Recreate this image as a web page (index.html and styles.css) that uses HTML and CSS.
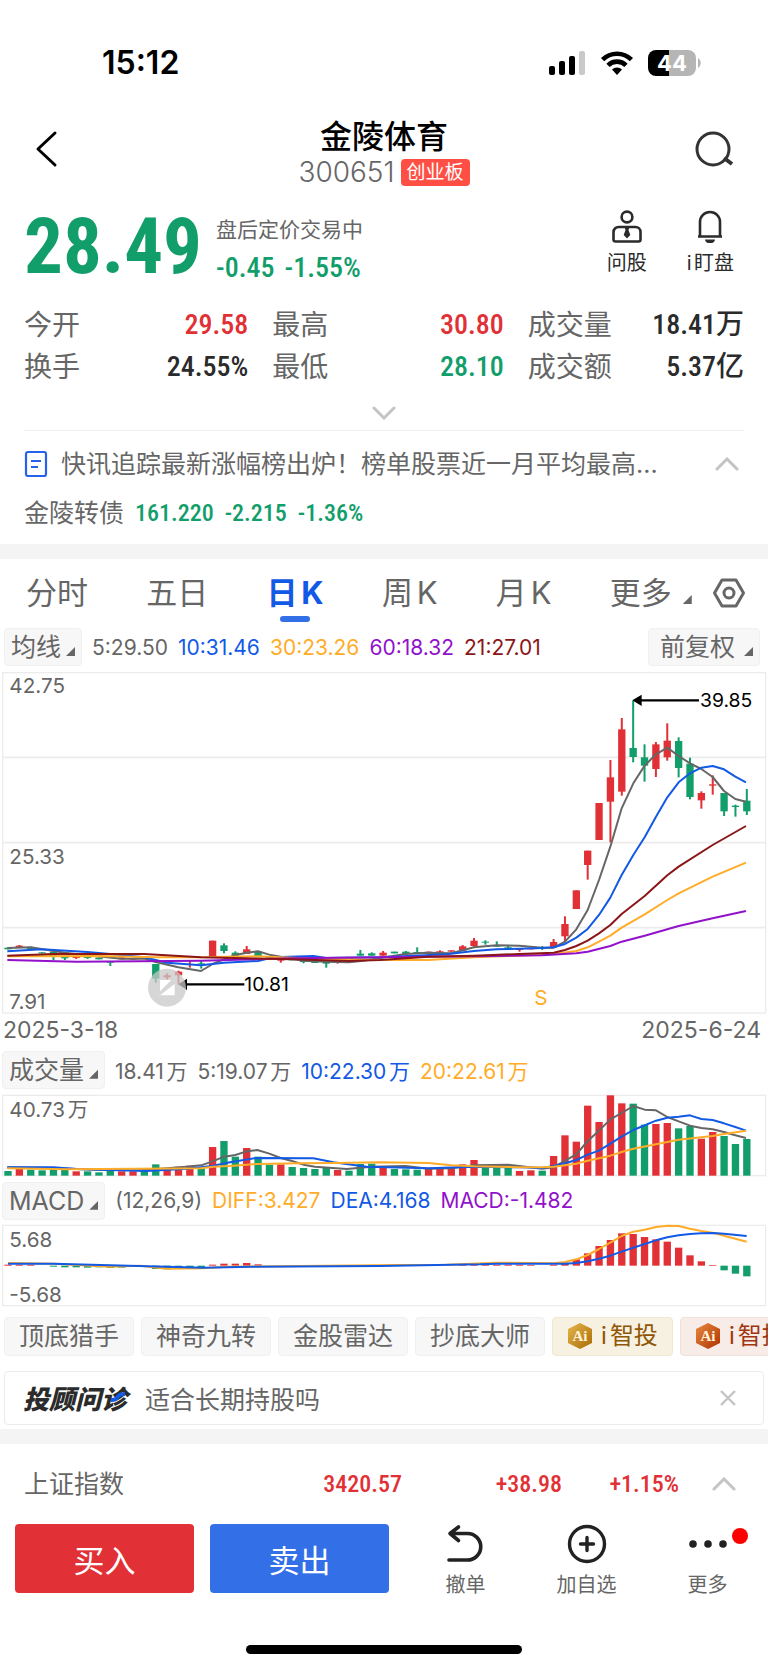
FILE: index.html
```html
<!DOCTYPE html>
<html lang="zh-CN">
<head>
<meta charset="utf-8">
<meta name="viewport" content="width=device-width, initial-scale=1">
<title>金陵体育 300651</title>
<link rel="stylesheet" href="styles.css">
</head>
<body>
<div class="status">
  <span class="clock">15:12</span>
  <span class="indicators">
    <svg width="38" height="26" viewBox="0 0 38 26"><rect x="1" y="16" width="6" height="9" rx="2"/><rect x="11" y="11" width="6" height="14" rx="2"/><rect x="21" y="6" width="6" height="19" rx="2"/><rect x="31" y="1" width="6" height="24" rx="2" fill="#c9c9c9"/></svg>
    <svg width="34" height="26" viewBox="0 0 34 26"><g fill="none" stroke="#000" stroke-width="4.6"><path d="M2.6 9.6A20.5 20.5 0 0 1 31.4 9.6"/><path d="M8 15.4A12.6 12.6 0 0 1 26 15.4"/></g><path d="M17 25l-5-5.4a7 7 0 0 1 10 0z"/></svg>
    <span class="battery"><span class="level">44</span><svg width="5" height="10" viewBox="0 0 5 10"><path d="M1 0a6 6 0 0 1 0 10z" fill="#b5b5b5"/></svg></span>
  </span>
</div>

<header class="top">
  <button class="icon-btn" aria-label="返回"><svg width="44" height="44" viewBox="0 0 44 44"><path d="M23 6 6 22l17 16" fill="none" stroke="#000" stroke-width="3" stroke-linecap="round" stroke-linejoin="round"/></svg></button>
  <div class="title">
    <h1>金陵体育</h1>
    <p class="code"><span>300651</span><span class="tag">创业板</span></p>
  </div>
  <button class="icon-btn" aria-label="搜索"><svg width="44" height="44" viewBox="0 0 44 44"><g fill="none" stroke="#333" stroke-width="3"><circle cx="21" cy="22" r="16"/><path d="m32 31 8 6" stroke-width="4"/></g></svg></button>
</header>

<section class="quote">
  <strong class="price">28.49</strong>
  <div class="change">
    <span class="session">盘后定价交易中</span>
    <span class="delta"><span>-0.45</span><span>-1.55%</span></span>
  </div>
  <div class="tools">
    <button class="tool"><svg width="32" height="34" viewBox="0 0 32 34"><g fill="none" stroke="#2b2b2b" stroke-width="2.6"><circle cx="16" cy="8" r="5.4"/><path d="M4.500 32.500h23a2 2 0 0 0 2-2V23a5 5 0 0 0-5-5h-17a5 5 0 0 0-5 5v7.500a2 2 0 0 0 2 2z"/></g><path d="M13.500 18h5l-1 3 1.800 5-3.300 3.400-3.300-3.400 1.800-5z" fill="#2b2b2b"/></svg>问股</button>
    <button class="tool"><svg width="32" height="34" viewBox="0 0 32 34"><path d="M4 27.500h24M6 27V13a10 10 0 0 1 20 0v14" fill="none" stroke="#2b2b2b" stroke-width="2.600"/><path d="M11 30.500h10a5 4 0 0 1-10 0z" fill="#2b2b2b"/></svg>i盯盘</button>
  </div>
</section>

<dl class="stats">
  <div><dt>今开</dt><dd class="up">29.58</dd></div>
  <div><dt>最高</dt><dd class="up">30.80</dd></div>
  <div><dt>成交量</dt><dd>18.41万</dd></div>
  <div><dt>换手</dt><dd>24.55%</dd></div>
  <div><dt>最低</dt><dd class="down">28.10</dd></div>
  <div><dt>成交额</dt><dd>5.37亿</dd></div>
</dl>
<button class="expand" aria-label="展开"><svg class="chev" viewBox="0 0 24 14"><path d="M2 2l10 10L22 2"/></svg></button>

<section class="related">
  <a class="news" href="#"><svg width="24" height="28" viewBox="0 0 24 28"><g fill="none" stroke="#2563eb" stroke-width="2.200"><rect x="2" y="2" width="20" height="24" rx="2"/><path d="M7 11h10M7 17h7"/></g></svg><span>快讯追踪最新涨幅榜出炉！榜单股票近一月平均最高...</span></a>
  <button class="fold" aria-label="收起"><svg class="chev" viewBox="0 0 24 14"><path d="M2 12L12 2l10 10"/></svg></button>
  <a class="bond" href="#"><span>金陵转债</span><b>161.220</b><b>-2.215</b><b>-1.36%</b></a>
</section>

<main class="chart">
  <nav class="tabs">
    <a href="#">分时</a><a href="#">五日</a><a href="#" class="active">日K</a><a href="#">周K</a><a href="#">月K</a><a href="#" class="more">更多<i class="caret"></i></a>
    <button class="icon-btn" aria-label="设置"><svg width="34" height="32" viewBox="0 0 34 32"><g fill="none" stroke="#666" stroke-width="3"><path d="M10 3h14l7.500 13L24 29H10L2.500 16z" stroke-linejoin="round"/><circle cx="17" cy="16" r="5"/></g></svg></button>
  </nav>
  <div class="legend">
    <button class="pick">均线<i class="caret"></i></button>
    <span>5:29.50</span><span class="blue">10:31.46</span><span class="orange">30:23.26</span><span class="purple">60:18.32</span><span class="maroon">21:27.01</span>
    <button class="pick adjust">前复权<i class="caret"></i></button>
  </div>
  <svg class="plot main" id="kline" viewBox="0 0 2304 1034" role="img" aria-label="日K线"></svg>
  <div class="dates"><span>2025-3-18</span><span>2025-6-24</span></div>
  <div class="legend sub">
    <button class="pick">成交量<i class="caret"></i></button>
    <span>18.41万</span><span>5:19.07万</span><span class="blue">10:22.30万</span><span class="orange">20:22.61万</span>
  </div>
  <svg class="plot" id="volume" viewBox="0 156 2304 261" role="img" aria-label="成交量"></svg>
  <div class="legend sub">
    <button class="pick">MACD<i class="caret"></i></button>
    <span>(12,26,9)</span><span class="orange">DIFF:3.427</span><span class="blue">DEA:4.168</span><span class="purple">MACD:-1.482</span>
  </div>
  <svg class="plot" id="macd" viewBox="0 549 2304 261" role="img" aria-label="MACD"></svg>
</main>

<div class="chips">
  <button>顶底猎手</button><button>神奇九转</button><button>金股雷达</button><button>抄底大师</button>
  <button class="gold"><svg width="26" height="26" viewBox="0 0 26 26"><defs><linearGradient id="g1" x1="0" y1="0" x2="1" y2="1"><stop offset="0" stop-color="#e8b64c"/><stop offset="1" stop-color="#a86a08"/></linearGradient></defs><path d="M13 0 25 6v14l-12 6L1 20V6z" fill="url(#g1)"/><text x="13" y="18" text-anchor="middle" class="ai">Ai</text></svg>i智投</button>
  <button class="copper"><svg width="26" height="26" viewBox="0 0 26 26"><defs><linearGradient id="g2" x1="0" y1="0" x2="1" y2="1"><stop offset="0" stop-color="#e98a3c"/><stop offset="1" stop-color="#ad3206"/></linearGradient></defs><path d="M13 0 25 6v14l-12 6L1 20V6z" fill="url(#g2)"/><text x="13" y="18" text-anchor="middle" class="ai">Ai</text></svg>i智投</button>
</div>

<section class="advice">
  <strong>投顾问诊<svg width="14" height="10" viewBox="0 0 14 10"><path d="M0 8c5 0 5-1 7-3.500S10 2 14 2" fill="none" stroke="#1259e6" stroke-width="4"/></svg></strong><span>适合长期持股吗</span>
  <button class="icon-btn" aria-label="关闭"><svg width="16" height="16" viewBox="0 0 16 16"><path d="M1 1l14 14M15 1L1 15" stroke="#c4c4c4" stroke-width="2.400"/></svg></button>
</section>

<section class="index">
  <span class="name">上证指数</span><b>3420.57</b><b>+38.98</b><b>+1.15%</b>
  <button class="icon-btn" aria-label="展开指数"><svg class="chev" viewBox="0 0 24 14"><path d="M2 12L12 2l10 10"/></svg></button>
</section>

<footer class="actions">
  <button class="trade buy">买入</button>
  <button class="trade sell">卖出</button>
  <button class="act"><svg width="40" height="40" viewBox="0 0 40 40"><path d="M3 36h18.500a13.200 13.200 0 0 0 0-26.500H4M12.500 3 4 9.500l8.500 7" fill="none" stroke="#222" stroke-width="3.600" stroke-linecap="round" stroke-linejoin="round"/></svg>撤单</button>
  <button class="act"><svg width="40" height="40" viewBox="0 0 40 40"><g fill="none" stroke="#222" stroke-width="3.400" stroke-linecap="round"><circle cx="20" cy="20" r="17.500"/><path d="M20 13.500v13M13.500 20h13"/></g></svg>加自选</button>
  <button class="act"><svg width="40" height="40" viewBox="0 0 40 40"><g fill="#222"><circle cx="5" cy="20" r="3.800"/><circle cx="20" cy="20" r="3.800"/><circle cx="35" cy="20" r="3.800"/></g></svg><i class="dot"></i>更多</button>
</footer>
<div class="home"></div>
<script src="charts.js"></script>
</body>
</html>
```
FILE: styles.css
```css
* { box-sizing: border-box; margin: 0; padding: 0; }
body { background: #fff; color: #666; font-family: Inter, "Noto Sans CJK SC", sans-serif; text-autospace: normal; overflow-x: hidden; }
button { border: 0; background: none; font: inherit; color: inherit; }
a { color: inherit; text-decoration: none; }
svg { display: block; flex: none; }
.icon-btn { display: flex; align-items: center; justify-content: center; }
.up, .index b { color: #e13036; }
.down { color: #129e6b; }
.blue { color: #1259e6; }
.orange { color: #ffac28; }
.purple { color: #9211cb; }
.maroon { color: #8b1618; }

.status { display: flex; justify-content: space-between; align-items: center; height: 119px; padding: 6px 66px 0 102px; }
.clock { font-size: 32px; font-weight: 600; color: #000; }
.indicators { display: flex; align-items: center; gap: 14px; }
.battery { display: flex; align-items: center; gap: 1px; }
.level { width: 48px; height: 26px; border-radius: 8px; background: linear-gradient(90deg, #000 44%, #b5b5b5 44%); color: #fff; font-size: 22px; font-weight: 700; line-height: 26px; text-align: center; }

.top { display: flex; justify-content: space-between; align-items: flex-start; padding: 0 32px; }
.top .icon-btn { height: 60px; }
.title { text-align: center; }
.title h1 { font-size: 32px; font-weight: 500; line-height: 36px; color: #000; }
.code { display: flex; align-items: center; justify-content: center; gap: 6px; font-size: 28px; font-weight: 300; line-height: 34px; }
.tag { padding: 0 6px; border-radius: 4px; background: #ff4f45; color: #fff; font-size: 19px; font-weight: 400; line-height: 27px; }

.price, .delta, .stats dd, .bond b, .index b { font-family: "Roboto Condensed", "Liberation Sans Narrow", Roboto, "Noto Sans CJK SC", sans-serif; text-autospace: no-autospace; }
.quote { display: flex; align-items: center; height: 115px; padding: 0 24px; }
.price { font-size: 77px; line-height: 84px; color: #129e6b; font-weight: 700; }
.change { display: flex; flex-direction: column; gap: 8px; margin-left: 14px; padding-top: 4px; }
.session { font-size: 21px; line-height: 30px; }
.delta { display: flex; gap: 10px; font-size: 28px; font-weight: 500; line-height: 30px; color: #129e6b; }
.tools { display: flex; gap: 40px; margin-left: auto; padding: 0 10px 8px 0; }
.tool { display: flex; flex-direction: column; align-items: center; gap: 6px; font-size: 20px; line-height: 28px; color: #2b2b2b; }

.stats { display: grid; grid-template-columns: 224fr 231fr 216fr; column-gap: 24px; padding: 0 24px; }
.stats div { display: flex; justify-content: space-between; align-items: center; height: 42px; }
.stats dt { font-size: 28px; line-height: 38px; }
.stats dd { font-size: 28px; font-weight: 500; line-height: 42px; color: #2b2b2b; }
.stats dd.up { color: #e13036; }
.stats dd.down { color: #129e6b; }
.expand { display: flex; justify-content: center; align-items: center; width: 100%; height: 42px; padding-top: 8px; }
.chev { width: 24px; height: 14px; fill: none; stroke: #c4c4c4; stroke-width: 3; stroke-linecap: round; }

.related { display: grid; grid-template-columns: 1fr auto; align-items: center; margin: 0 24px; padding: 8px 0 6px; border-top: 1px solid #f0f0f0; height: 114px; }
.news { display: flex; align-items: center; gap: 13px; min-width: 0; font-size: 25px; line-height: 48px; white-space: nowrap; text-autospace: no-autospace; }
.fold { padding: 0 5px; }
.bond { display: flex; align-items: center; grid-column: 1 / -1; gap: 11px; font-size: 25px; line-height: 48px; }
.bond b { color: #129e6b; font-weight: 500; font-size: 24px; }

.chart { border-top: 15px solid #f4f4f4; }
.tabs { display: flex; justify-content: space-between; align-items: center; height: 68px; padding: 0 22px 0 26px; font-size: 31px; }
.tabs a { position: relative; line-height: 58px; }
.tabs .active { color: #1259e6; font-weight: 700; }
.tabs .active::after { content: ""; position: absolute; left: 50%; bottom: 0; width: 30px; height: 6px; margin-left: -15px; border-radius: 3px; background: #3370e8; }
.caret { display: inline-block; width: 9px; height: 9px; margin-left: 5px; background: #666; clip-path: polygon(100% 0, 100% 100%, 0 100%); }
.tabs .caret { margin-left: 11px; }
.tabs .more { margin-right: -38px; }
.legend { display: flex; align-items: center; gap: 10px; height: 40px; padding: 0 8px 0 4px; font-size: 21px; white-space: nowrap; }
.pick { height: 38px; padding: 0 6px; border: 1px solid #f0f0f0; border-radius: 4px; background: #f7f7f7; font-size: 25px; line-height: 36px; }
.adjust { margin-left: auto; padding: 0 6px 0 11px; }
.adjust .caret { margin-left: 9px; }
.plot { width: 100%; height: auto; }
.main { margin-top: 3px; }
.plot text { font-size: 62px; fill: #666; text-autospace: no-autospace; }
.plot .mark { fill: #000; font-size: 58px; }
.dates { display: flex; justify-content: space-between; padding: 0 7px 0 3px; font-size: 23px; line-height: 30px; }
.sub { height: 44px; padding-left: 2px; }
.dates + .sub { margin-top: 3px; }

.chips { display: flex; gap: 7px; padding: 7px 0 0 4px; overflow: hidden; }
.chips button { display: flex; flex: none; align-items: center; justify-content: center; gap: 8px; height: 39px; padding: 0 14px; border: 1px solid #f0f0f0; border-radius: 4px; background: #f7f7f7; font-size: 25px; line-height: 36px; white-space: nowrap; }
.chips .gold, .chips .copper { font-size: 24px; }
.chips .gold { background: #f7f1e1; border-color: #f0e7d0; color: #8f5606; }
.chips .copper { background: #f7ece7; border-color: #f0e0d8; color: #a03510; }
.ai { font: bold 15px "Liberation Serif", serif; fill: #fff3d6; }

.advice { display: flex; align-items: center; height: 54px; margin: 15px 4px 4px; padding: 0 27px 0 18px; border: 1px solid #ebebeb; border-radius: 4px; font-size: 25px; }
.advice strong { position: relative; font-size: 26px; font-weight: 900; font-style: italic; color: #2b2b2b; margin-right: 18px; }
.advice strong svg { position: absolute; right: 2px; top: 13px; }
.advice .icon-btn { margin-left: auto; }

.index { display: grid; grid-template-columns: auto 1fr 160px 117px 89px; align-items: center; height: 95px; padding-left: 24px; border-top: 15px solid #f4f4f4; font-size: 25px; }
.index b { font-size: 24px; font-weight: 500; text-align: right; }
.index .name { padding-bottom: 3px; }

.actions { display: flex; align-items: center; height: 70px; padding: 0 0 0 15px; }
.trade { width: 179px; height: 69px; margin-right: 16px; border-radius: 4px; color: #fff; font-size: 31px; }
.buy { background: #e13036; }
.sell { background: #3370e8; }
.act { position: relative; flex: 1; display: flex; flex-direction: column; align-items: center; gap: 7px; padding-top: 5px; font-size: 20px; line-height: 28px; }
.dot { position: absolute; top: 9px; right: 20px; width: 16px; height: 16px; border-radius: 50%; background: #f00; }
.home { width: 36%; height: 9px; margin: 51px auto 15px; border-radius: 5px; background: #000; }
```
FILE: charts.js
```js
const RED = '#e13036', GREEN = '#129e6b', GRAY = '#666', BLUE = '#1259e6';
const ORANGE = '#ffac28', PURPLE = '#9211cb', MAROON = '#8b1618';
const STEP = 34.1, FIRST = 24, BAR = 22;
const cx = i => FIRST + i * STEP;
const rect = (x, y, w, h, c) => `<rect x="${x}" y="${y}" width="${w}" height="${h}" fill="${c}"/>`;
const box = (y, h) => `<rect x="8" y="${y}" width="2289" height="${h}" fill="none" stroke="#ececec" stroke-width="4"/>`;
const grid = y => `<path d="M8 ${y}H2297" stroke="#ececec" stroke-width="5"/>`;
const line = (pts, c) => `<polyline points="${pts}" fill="none" stroke="${c}" stroke-width="6" stroke-linejoin="round"/>`;

// index, colour, body top, body bottom, high, low
const candles = [
  [0,'g',833,838],[1,'r',827,833,825],[2,'g',834,838,830],[3,'g',847,850],[4,'g',845,860,845,870],[5,'g',860,865,860,870],
  [6,'r',859,864,859,867],[7,'g',860,864,860,867],[8,'g',863,868],[9,'g',877,879,877,888],[10,'r',862,868],[11,'r',866,869],
  [12,'g',864,867],[13,'g',882,926,882,938],[14,'r',916,922,910,928],[15,'r',905,916,902,943],[16,'r',883,885,873,893],
  [17,'g',880,882,872,896],[18,'r',812,858],[19,'g',826,843,820,850],[20,'g',848,858,844],[21,'r',838,852,828],[22,'g',846,860],
  [23,'g',858,863],[24,'r',868,872,868,878],[25,'g',868,871],[26,'g',870,876,870,880],[27,'g',872,879],[28,'g',875,881,875,893],
  [29,'r',872,877,872,881],[30,'g',864,868],[31,'g',851,857,840],[32,'g',850,857,847],[33,'r',848,857,843],[34,'g',845,850],
  [35,'g',845,852,843],[36,'g',846,851,832],[37,'r',845,851,845,858],[38,'r',844,848,841],[39,'r',841,845],[40,'r',829,842,825],
  [41,'r',812,828,804,832],[42,'g',815,818,811,824],[43,'g',826,830,814],[44,'g',832,838,826],[45,'r',837,840,837,845],
  [46,'r',836,838],[47,'g',832,837,828,840],[48,'r',816,832,807],[49,'r',762,799,739,817],[50,'r',661,717],[51,'r',542,585,542,629],
  [52,'r',399,510],[53,'r',322,395,270,517],[54,'r',178,365,144,377],[55,'g',234,261,92,277],[56,'g',262,287,223,335],
  [57,'r',223,297,216,321],[58,'r',212,262,160,272],[59,'g',213,294,202,322],[60,'g',281,381,263,388],[61,'r',369,391,364,416],
  [62,'r',343,347,316,374],[63,'g',369,424,369,438],[64,'g',407,411,404,440],[65,'g',392,424,357,435]
];
const averages = [
  ['22,834 92,832 194,848 262,856 365,866 433,866 467,876 535,892 603,903 638,882 672,868 706,855 740,848 774,844 808,854 910,872 979,875 1047,877 1090,872 1140,864 1217,852 1285,848 1354,850 1422,832 1490,826 1558,827 1626,833 1661,833 1695,815 1729,778 1763,720 1797,630 1831,530 1865,415 1900,340 1934,287 1968,253 2002,233 2036,258 2070,280 2104,297 2138,321 2172,363 2206,387 2238,395', GRAY],
  ['22,844 126,838 262,846 330,852 433,862 501,878 603,886 672,878 774,873 820,862 940,858 979,864 1140,862 1340,853 1422,843 1490,838 1558,836 1626,834 1661,832 1695,822 1729,803 1763,777 1797,735 1831,683 1865,615 1900,555 1934,502 1968,440 2002,382 2036,337 2070,310 2104,293 2138,288 2172,298 2206,320 2238,337', BLUE],
  ['22,859 300,858 467,862 603,862 774,859 910,865 1140,870 1285,870 1422,862 1558,857 1661,852 1729,843 1763,832 1797,815 1831,797 1865,773 1934,733 2002,690 2036,670 2138,620 2238,578', ORANGE],
  ['22,870 230,875 603,872 876,865 1140,862 1422,859 1626,856 1729,850 1763,845 1831,828 1865,815 1934,797 2036,768 2138,745 2238,723', PURPLE],
  ['22,857 160,852 433,852 603,862 876,868 1047,873 1140,870 1285,860 1422,857 1558,852 1661,848 1695,840 1729,828 1763,812 1797,790 1831,765 1865,732 1934,678 2002,616 2036,590 2138,525 2238,468', MAROON]
];
let k = box(8, 1021) + grid(262) + grid(518) + grid(773);
for (const [i, c, top, bottom, high = top, low = bottom] of candles) {
  const color = c === 'r' ? RED : GREEN;
  k += rect(cx(i) - BAR / 2, top, BAR, bottom - top, color) + rect(cx(i) - 3, high, 6, low - high, color);
}
for (const [pts, c] of averages) k += line(pts, c);
k += '<path d="M1905 91H2097M560 943H733" stroke="#000" stroke-width="7"/><path d="M1897 91l28-17v34zM535 943l26-17v34z"/>'
  + '<text x="2100" y="112" class="mark">39.85</text><text x="733" y="964" class="mark">10.81</text>'
  + '<circle cx="501" cy="953" r="57" fill="#c8c8c8" fill-opacity=".75"/>'
  + '<path d="M480 930h34l-34 34zM524 942v34h-44z" fill="#fff"/>'
  + '<text x="28" y="70">42.75</text><text x="28" y="582">25.33</text><text x="28" y="1018">7.91</text>'
  + `<text x="1603" y="1006" style="fill:${ORANGE}">S</text>`;
document.getElementById('kline').innerHTML = k;

const volumes = '393g 387r 389g 391g 390g 389g 394r 394g 397g 393g 394r 394r 391g 373g 384r 380r 377r 383g 321r 303g 350g 324r 350g 374g 373r 381g 384g 387g 384g 390r 392g 372g 371g 384r 387g 388g 389g 387r 385r 384r 373r 360r 383g 383g 384g 393r 391r 392g 348r 286r 305r 197r 246r 166r 190r 191g 254g 252r 249r 265g 258g 296r 276r 288g 312g 297g'.split(' ');
let v = box(166, 241);
volumes.forEach((s, i) => {
  const y = parseInt(s, 10);
  v += rect(cx(i) - BAR / 2, y, BAR, 407 - y, s.endsWith('r') ? RED : GREEN);
});
v += line('22,382 160,384 300,390 420,391 500,385 560,380 603,376 638,364 672,350 706,345 740,334 772,330 808,341 842,354 876,363 910,374 945,380 1040,387 1115,380 1217,378 1285,386 1354,385 1422,376 1524,374 1558,378 1626,386 1661,382 1695,362 1729,343 1763,303 1797,272 1831,238 1865,219 1900,198 1934,209 1968,211 2002,231 2036,244 2070,257 2104,264 2138,268 2172,276 2206,286 2238,294', GRAY)
  + line('22,382 160,382 230,387 440,393 560,386 603,382 640,377 690,367 770,354 940,355 1000,367 1100,380 1285,385 1422,380 1560,382 1626,384 1661,378 1695,370 1729,360 1763,344 1797,332 1865,290 1900,270 1968,242 2002,233 2036,230 2070,226 2104,237 2138,240 2172,250 2206,261 2238,272', BLUE)
  + line('22,385 200,388 603,385 640,380 700,377 770,372 900,370 1000,369 1140,367 1285,369 1354,376 1422,379 1560,382 1626,382 1661,380 1729,371 1763,362 1831,347 1865,336 1900,326 2036,299 2138,288 2172,282 2238,272', ORANGE)
  + '<text x="28" y="230">40.73<tspan dx="8">万</tspan></text>';
document.getElementById('volume').innerHTML = v;

const ZERO = 677;
const bars = { 0: 674, 1: 674, 2: 674, 4: 680, 5: 682, 6: 682, 7: 683, 8: 682, 9: 684, 10: 683, 11: 680, 12: 680, 13: 687, 14: 688, 15: 686, 16: 682, 17: 681,
  18: 674, 19: 671, 20: 671, 21: 669, 22: 673, 40: 675, 41: 674, 42: 674, 43: 674, 44: 674, 45: 674, 46: 675, 48: 674, 49: 668, 50: 658, 51: 640, 52: 618, 53: 600,
  54: 580, 55: 582, 56: 591, 57: 598, 58: 605, 59: 623, 60: 646, 61: 664, 62: 675, 63: 691, 64: 701, 65: 709 };
let m = box(556, 241);
for (const i in bars) {
  const y = bars[i];
  m += rect(cx(+i) - BAR / 2, Math.min(y, ZERO), BAR, Math.abs(y - ZERO), y < ZERO ? RED : GREEN);
}
m += line('24,669 160,671 330,680 420,677 500,686 610,685 680,680 900,678 1200,675 1340,674 1490,668 1660,670 1695,666 1729,658 1763,645 1797,627 1831,608 1865,588 1900,575 1934,569 1968,561 2002,557 2036,558 2070,566 2104,573 2138,578 2172,587 2206,596 2240,605', ORANGE)
  + line('24,671 160,671 500,680 610,683 750,680 1140,678 1440,673 1490,671 1695,671 1729,669 1763,664 1797,656 1831,647 1865,635 1934,612 1968,601 2002,592 2036,586 2070,582 2104,580 2140,579 2172,581 2240,588', BLUE)
  + '<text x="28" y="621">5.68</text><text x="28" y="787">-5.68</text>';
document.getElementById('macd').innerHTML = m;
```
